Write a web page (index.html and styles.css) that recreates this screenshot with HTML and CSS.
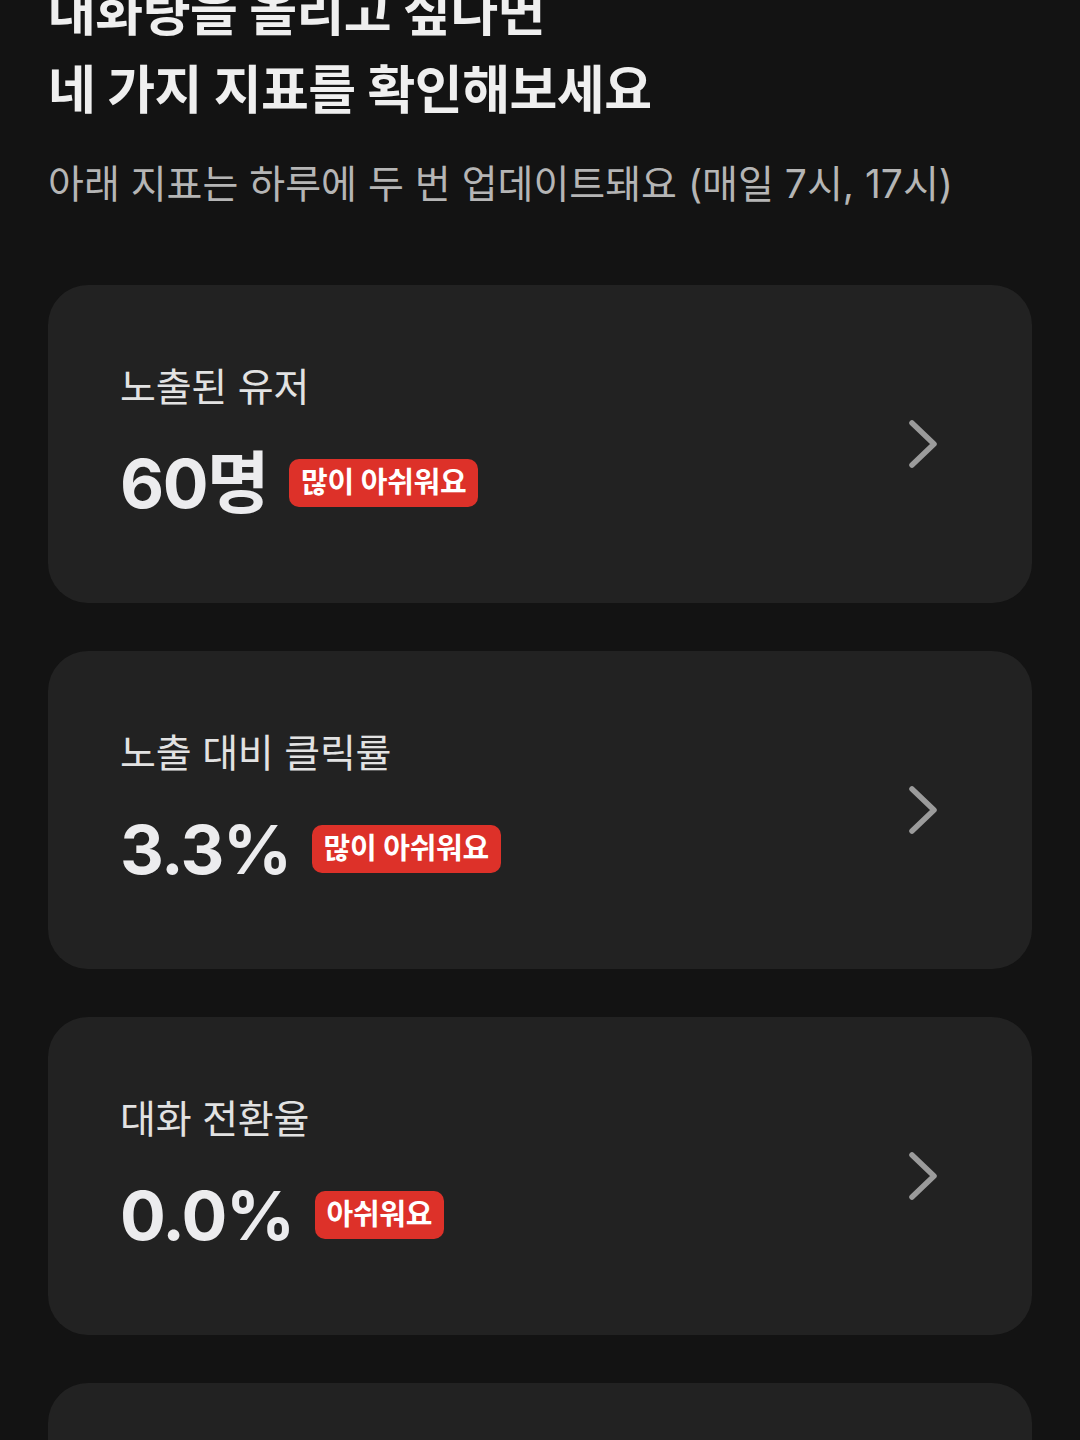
FILE: index.html
```html
<!DOCTYPE html>
<html lang="ko">
  <head>
    <meta charset="utf-8">
    <title>지표 확인</title>
    <link rel="stylesheet" href="styles.css">
  </head>
  <body>
    <div class="page">
      <h1 class="title">대화량을 올리고 싶다면<br>네 가지 지표를 확인해보세요</h1>
      <p class="desc">아래 지표는 하루에 두 번 업데이트돼요 (매일 7시, 17시)</p>

      <div class="cards">
        <a class="card" href="#">
          <div class="card_info">
            <p class="label">노출된 유저</p>
            <div class="value_row">
              <span class="value">60명</span>
              <span class="badge">많이 아쉬워요</span>
            </div>
          </div>
          <svg class="chevron" width="40" height="56" viewBox="0 0 40 56">
            <path d="M10 7 L32 28 L10 49" />
          </svg>
        </a>

        <a class="card" href="#">
          <div class="card_info">
            <p class="label">노출 대비 클릭률</p>
            <div class="value_row">
              <span class="value">3.3%</span>
              <span class="badge">많이 아쉬워요</span>
            </div>
          </div>
          <svg class="chevron" width="40" height="56" viewBox="0 0 40 56">
            <path d="M10 7 L32 28 L10 49" />
          </svg>
        </a>

        <a class="card" href="#">
          <div class="card_info">
            <p class="label">대화 전환율</p>
            <div class="value_row">
              <span class="value">0.0%</span>
              <span class="badge">아쉬워요</span>
            </div>
          </div>
          <svg class="chevron" width="40" height="56" viewBox="0 0 40 56">
            <path d="M10 7 L32 28 L10 49" />
          </svg>
        </a>

        <a class="card" href="#">
          <div class="card_info">
            <p class="label">대화 응답률</p>
            <div class="value_row">
              <span class="value">0.0%</span>
              <span class="badge">아쉬워요</span>
            </div>
          </div>
          <svg class="chevron" width="40" height="56" viewBox="0 0 40 56">
            <path d="M10 7 L32 28 L10 49" />
          </svg>
        </a>
      </div>
    </div>
  </body>
</html>
```

FILE: styles.css
```css
html, body {
  margin: 0;
  padding: 0;
  background-color: #131313;
}

body {
  font-family: Inter, "Noto Sans CJK KR", sans-serif;
  color: #ececec;
}

.page {
  padding: 0 48px;
  margin-top: -26px;
}

.title {
  margin: 0;
  font-size: 52px;
  font-weight: 700;
  line-height: 78px;
  color: #efefef;
  letter-spacing: -0.5px;
}

.desc {
  margin: 28px 0 0 0;
  font-size: 39px;
  line-height: 52px;
  color: #b5b5b5;
}

.cards {
  display: flex;
  flex-direction: column;
  gap: 48px;
  margin-top: 75px;
}

.card {
  display: flex;
  align-items: center;
  justify-content: space-between;
  height: 318px;
  box-sizing: border-box;
  padding: 0 90px 0 72px;
  background-color: #222222;
  border-radius: 40px;
  text-decoration: none;
  color: inherit;
}

.card_info {
  margin-bottom: 3px;
}

.label {
  margin: 0;
  font-size: 39px;
  line-height: 46px;
  color: #e2e2e2;
  letter-spacing: -0.2px;
}

.value_row {
  display: flex;
  align-items: center;
  gap: 21px;
  margin-top: 35px;
}

.value {
  font-size: 68px;
  font-weight: 700;
  line-height: 76px;
  color: #ececee;
  letter-spacing: -1.5px;
}

.badge {
  display: inline-block;
  height: 48px;
  line-height: 48px;
  padding: 0 12px;
  border-radius: 10px;
  background-color: #dd3129;
  color: #ffffff;
  font-size: 29px;
  font-weight: 600;
  letter-spacing: -0.3px;
}

.chevron path {
  fill: none;
  stroke: #9b9b9b;
  stroke-width: 5.5;
  stroke-linecap: round;
  stroke-linejoin: round;
}
```
